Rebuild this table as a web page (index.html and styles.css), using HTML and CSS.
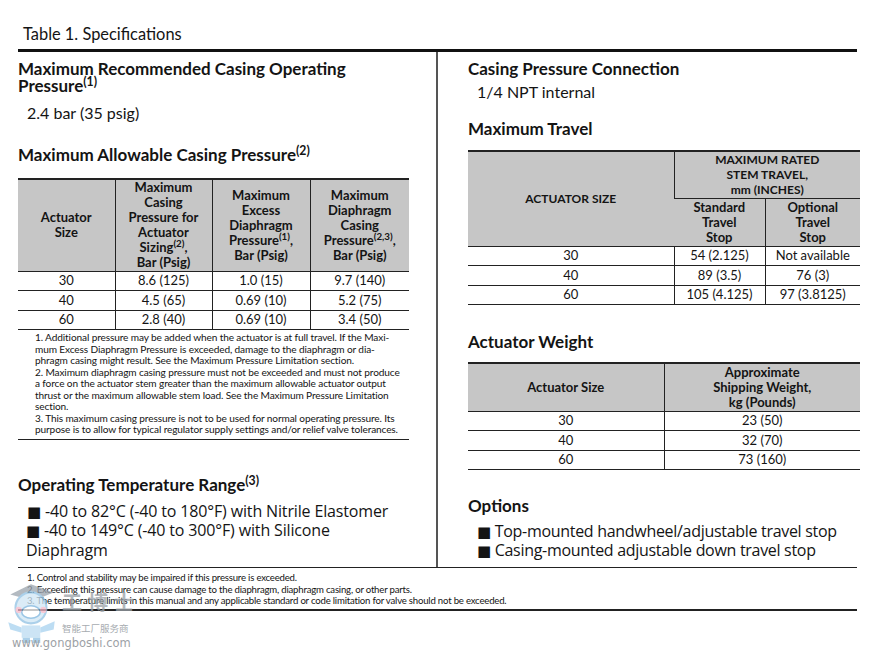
FILE: index.html
```html
<!DOCTYPE html>
<html lang="en">
<head>
<meta charset="utf-8">
<title>Table 1. Specifications</title>
<link rel="stylesheet" href="styles.css">
</head>
<body>
<div class="page">
  <div class="title">Table 1. Specifications</div>
  <div class="cols">
    <div class="col left">
      <h2 class="h h1">Maximum Recommended Casing Operating<br>Pressure<sup>(1)</sup></h2>
      <p class="val v1">2.4 bar (35 psig)</p>
      <h2 class="h h2">Maximum Allowable Casing Pressure<sup>(2)</sup></h2>
      <table class="tbl t-casing">
        <colgroup><col class="c97"><col class="c97"><col class="c98"><col></colgroup>
        <thead>
          <tr>
            <th>Actuator<br>Size</th>
            <th>Maximum<br>Casing<br>Pressure for<br>Actuator<br>Sizing<sup>(2)</sup>,<br>Bar (Psig)</th>
            <th>Maximum<br>Excess<br>Diaphragm<br>Pressure<sup>(1)</sup>,<br>Bar (Psig)</th>
            <th>Maximum<br>Diaphragm<br>Casing<br>Pressure<sup>(2,3)</sup>,<br>Bar (Psig)</th>
          </tr>
        </thead>
        <tbody>
          <tr><td>30</td><td>8.6 (125)</td><td>1.0 (15)</td><td>9.7 (140)</td></tr>
          <tr><td>40</td><td>4.5 (65)</td><td>0.69 (10)</td><td>5.2 (75)</td></tr>
          <tr><td>60</td><td>2.8 (40)</td><td>0.69 (10)</td><td>3.4 (50)</td></tr>
        </tbody>
      </table>
      <div class="notes">
        1. Additional pressure may be added when the actuator is at full travel. If the Maxi-<br>mum Excess Diaphragm Pressure is exceeded, damage to the diaphragm or dia-<br>phragm casing might result. See the Maximum Pressure Limitation section.<br>
        2. Maximum diaphragm casing pressure must not be exceeded and must not produce<br>a force on the actuator stem greater than the maximum allowable actuator output<br>thrust or the maximum allowable stem load. See the Maximum Pressure Limitation<br>section.<br>
        3. This maximum casing pressure is not to be used for normal operating pressure. Its<br>purpose is to allow for typical regulator supply settings and/or relief valve tolerances.
      </div>
      <h2 class="h h3">Operating Temperature Range<sup>(3)</sup></h2>
      <ul class="bul b1">
        <li><span class="sq">&#9632;</span> -40 to 82°C (-40 to 180°F) with Nitrile Elastomer</li>
        <li><span class="sq">&#9632;</span> -40 to 149°C (-40 to 300°F) with Silicone<br>Diaphragm</li>
      </ul>
    </div>
    <div class="col right">
      <h2 class="h h1">Casing Pressure Connection</h2>
      <p class="val v2">1/4 NPT internal</p>
      <h2 class="h h4">Maximum Travel</h2>
      <table class="tbl t-travel">
        <colgroup><col class="c206"><col class="c91"><col></colgroup>
        <thead>
          <tr>
            <th rowspan="2" class="caps">ACTUATOR SIZE</th>
            <th colspan="2" class="caps top">MAXIMUM RATED<br>STEM TRAVEL,<br>mm (INCHES)</th>
          </tr>
          <tr>
            <th class="sub">Standard<br>Travel<br>Stop</th>
            <th class="sub">Optional<br>Travel<br>Stop</th>
          </tr>
        </thead>
        <tbody>
          <tr><td>30</td><td>54 (2.125)</td><td>Not available</td></tr>
          <tr><td>40</td><td>89 (3.5)</td><td>76 (3)</td></tr>
          <tr><td>60</td><td>105 (4.125)</td><td>97 (3.8125)</td></tr>
        </tbody>
      </table>
      <h2 class="h h5">Actuator Weight</h2>
      <table class="tbl t-weight">
        <colgroup><col class="c196"><col></colgroup>
        <thead>
          <tr><th>Actuator Size</th><th>Approximate<br>Shipping Weight,<br>kg (Pounds)</th></tr>
        </thead>
        <tbody>
          <tr><td>30</td><td>23 (50)</td></tr>
          <tr><td>40</td><td>32 (70)</td></tr>
          <tr><td>60</td><td>73 (160)</td></tr>
        </tbody>
      </table>
      <h2 class="h h6">Options</h2>
      <ul class="bul b2">
        <li><span class="sq">&#9632;</span> Top-mounted handwheel/adjustable travel stop</li>
        <li><span class="sq">&#9632;</span> Casing-mounted adjustable down travel stop</li>
      </ul>
    </div>
  </div>
  <div class="foot">
    1. Control and stability may be impaired if this pressure is exceeded.<br>
    2. Exceeding this pressure can cause damage to the diaphragm, diaphragm casing, or other parts.<br>
    3. The temperature limits in this manual and any applicable standard or code limitation for valve should not be exceeded.
  </div>
</div>
<div class="watermark">
  <svg class="mascot" width="52" height="64" viewBox="0 0 50 62">
    <path d="M4 14 L24 4 L46 12 L26 20 Z" fill="#9aa3ad"/>
    <circle cx="24" cy="27" r="15" fill="#cfe6f5" stroke="#8fc1e3" stroke-width="2"/>
    <ellipse cx="24" cy="31" rx="9" ry="6" fill="#fff" stroke="#7ab3dd" stroke-width="1.5"/>
    <circle cx="12" cy="29" r="3" fill="#f5b7c8"/>
    <circle cx="36" cy="29" r="3" fill="#f5b7c8"/>
    <path d="M15 44 h18 v12 h-18 z" fill="#bcdcf2"/>
    <path d="M15 46 L2 41 L4 48 L15 51 Z M33 46 L47 40 L46 48 L33 51 Z" fill="#a8d2ef"/>
    <path d="M16 56 h7 v5 h-7 z M26 56 h7 v5 h-7 z" fill="#8fc1e3"/>
  </svg>
  <div class="brand">工博士</div>
  <div class="slogan">智能工厂服务商</div>
  <div class="url">www.gongboshi.com</div>
</div>
</body>
</html>
```
FILE: styles.css
```css
* { box-sizing: border-box; }
body {
  margin: 0;
  background: #fff;
  color: #141414;
  font-family: "Lato", "Liberation Sans", sans-serif;
}
.page {
  width: 878px;
  padding: 0 21px 0 18px;
}
.title {
  font-size: 16.4px;
  line-height: 20px;
  padding: 24px 0 5px 5px;
  border-bottom: 3px solid #111;
}
.cols {
  display: flex;
  border-bottom: 1px solid #222;
  height: 516px;
}
.col { flex: none; }
.col.left {
  width: 420px;
  border-right: 2px solid #555;
}
.col.right {
  padding-left: 30px;
  width: 422px;
}
.h {
  margin: 0;
  font-size: 17px;
  line-height: 17px;
  font-weight: 700;
}
.h sup {
  font-size: 0.72em;
  line-height: 0;
  vertical-align: 0.5em;
}
.tbl sup {
  font-size: 0.75em;
  line-height: 0;
  vertical-align: super;
}
.h1 { margin-top: 8px; }
.h2 { margin-top: 23px; }
.h3 { margin-top: 36px; }
.h4 { margin-top: 18px; }
.h5 { margin-top: 28px; }
.h6 { margin-top: 27px; }
.val {
  margin: 9px 0 0 9px;
  font-size: 16px;
  line-height: 20px;
}
.v2 { margin-top: 5px; }
.tbl {
  border-collapse: collapse;
  width: 391px;
  table-layout: fixed;
  font-size: 13px;
  line-height: 15px;
  text-align: center;
}
.t-casing { margin-top: 15px; }
.t-travel { margin-top: 13px; width: 392px; }
.t-weight { margin-top: 12px; width: 392px; }
.c97 { width: 97px; }
.c98 { width: 98px; }
.c206 { width: 206px; }
.c91 { width: 91px; }
.c196 { width: 196px; }
.tbl thead tr:first-child th { border-top: 2px solid #222; }
.tbl th {
  background: #c6c6c6;
  font-weight: 700;
  padding: 0 2px;
  border-left: 1px solid #222;
  border-bottom: 1px solid #222;
}
.tbl th:first-child, .tbl td:first-child { border-left: none; }
.t-casing th { height: 92px; }
.t-travel .top { height: 47px; border-bottom: 1px solid #222; }
.t-travel .sub { height: 48px; border-left: 1px solid #222; }
.t-travel .caps { font-size: 12px; }
.t-weight th { height: 48px; }
.tbl td {
  height: 19.5px;
  padding: 0;
  border-left: 1px solid #222;
  border-bottom: 1px solid #222;
}
.tbl tbody tr:last-child td { border-bottom: 1.5px solid #222; }
.notes {
  width: 391px;
  padding: 2px 0 3px 17px;
  font-size: 10.1px;
  line-height: 11.5px;
  letter-spacing: -0.12px;
  white-space: nowrap;
  border-bottom: 1.5px solid #222;
}
.bul {
  list-style: none;
  margin: 9px 0 0 9px;
  padding: 0;
  font-family: "Open Sans", "Noto Sans", sans-serif;
  font-size: 16px;
  line-height: 18.5px;
  letter-spacing: -0.15px;
}
.sq {
  font-family: "DejaVu Sans", sans-serif;
  font-size: 15px;
}
.b1 li:last-child { margin-left: -1px; }
.b2 { margin-top: 8px; line-height: 18px; letter-spacing: -0.3px; }
.foot {
  padding: 4px 0 2px 9px;
  font-size: 9.6px;
  line-height: 11.5px;
  letter-spacing: -0.2px;
  white-space: nowrap;
  border-bottom: 2px solid #222;
}
.watermark {
  position: absolute;
  left: 6px;
  top: 580px;
  width: 140px;
  height: 75px;
  opacity: 0.75;
}
.mascot { position: absolute; left: 0; top: 0; }
.brand {
  position: absolute;
  left: 56px;
  top: 10px;
  white-space: nowrap;
  font-family: "Noto Sans CJK SC", sans-serif;
  font-size: 20px;
  line-height: 24px;
  letter-spacing: 6px;
  color: #9aa1a8;
  font-weight: 700;
}
.slogan {
  position: absolute;
  left: 56px;
  top: 42px;
  white-space: nowrap;
  font-family: "Noto Sans CJK SC", sans-serif;
  font-size: 9.5px;
  line-height: 12px;
  color: #8a9096;
}
.url {
  position: absolute;
  left: 6px;
  top: 56px;
  white-space: nowrap;
  font-family: "DejaVu Sans", sans-serif;
  font-size: 11.5px;
  line-height: 14px;
  color: #7c8288;
}
```
